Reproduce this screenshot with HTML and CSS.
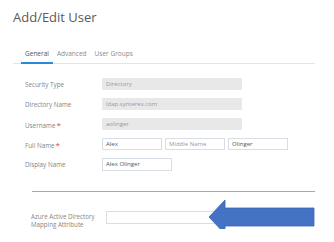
FILE: index.html
```html
<!DOCTYPE html>
<html lang="en">
<head>
    <meta charset="UTF-8">
    <title>Add/Edit User</title>
    <link rel="stylesheet" href="styles.css">
</head>
<body>
    <div class="page">
        <h1>Add/Edit User</h1>

        <!-- Tabs -->
        <div class="tabs">
            <span class="tab active">General</span>
            <span class="tab">Advanced</span>
            <span class="tab">User Groups</span>
        </div>

        <div class="form">
            <div class="row">
                <label>Security Type</label>
                <div class="field ro">Directory</div>
            </div>
            <div class="row">
                <label>Directory Name</label>
                <div class="field ro">ldap.synterex.com</div>
            </div>
            <div class="row">
                <label>Username<span class="req">*</span></label>
                <div class="field ro">aolinger</div>
            </div>
            <div class="row">
                <label>Full Name<span class="req">*</span></label>
                <div class="names">
                    <div class="field small">Alex</div>
                    <div class="field small hint">Middle Name</div>
                    <div class="field small">Olinger</div>
                </div>
            </div>
            <div class="row">
                <label>Display Name</label>
                <div class="field display">Alex Olinger</div>
            </div>
        </div>

        <hr class="sep">

        <div class="azure">
            <label>Azure Active Directory<br>Mapping Attribute</label>
            <div class="field azure-field"></div>
            <svg class="arrow" width="106" height="35" viewBox="0 0 106 35">
                <polygon points="0,17 16,0 16,8 105,8 105,26 16,26 16,34" fill="#4472c4" stroke="#3a64b0" stroke-width="0.8"/>
            </svg>
        </div>
    </div>
</body>
</html>
```

FILE: styles.css
```css
body {
    margin: 0;
    background: #ffffff;
    font-family: "Open Sans", Arial, sans-serif;
    color: #666;
}
.page {
    padding: 8px 19px 0 13px;
    position: relative;
}
h1 {
    font-size: 13px;
    font-weight: 400;
    color: #5a5a5a;
    margin: 0;
    line-height: 18px;
}
.tabs {
    margin-top: 21px;
    border-bottom: 1px solid #e4e4e4;
    padding-left: 8px;
    display: flex;
    font-size: 6.5px;
}
.tab {
    padding: 2px 4px 4px;
    color: #8a8a8a;
    border-bottom: 2px solid transparent;
    margin-bottom: -1px;
}
.tab.active {
    color: #555;
    border-bottom-color: #2a8ad8;
}
.form {
    padding: 14px 0 0 12px;
    display: flex;
    flex-direction: column;
    gap: 8px;
}
.row {
    display: flex;
    align-items: center;
    height: 12px;
}
.row label {
    width: 77px;
    font-size: 6.3px;
    color: #858585;
}
.req {
    color: #e0453a;
    font-size: 8px;
    margin-left: 1px;
}
.field {
    box-sizing: border-box;
    height: 12px;
    font-size: 6px;
    line-height: 10px;
    padding: 0 3px;
    color: #555;
    border: 1px solid #d8dee6;
    background: #fff;
}
.field.ro {
    width: 140px;
    background: #e8e8e8;
    border-color: #e8e8e8;
    color: #999;
}
.names {
    display: flex;
    gap: 3px;
}
.field.small {
    width: 60px;
}
.field.hint {
    color: #999;
}
.field.display {
    width: 70px;
    height: 13px;
}
.sep {
    border: none;
    border-top: 1px solid #a9a9a9;
    margin: 21px 0 0 19px;
}
.azure {
    display: flex;
    align-items: center;
    padding: 14px 0 0 18px;
    position: relative;
}
.azure label {
    width: 75px;
    font-size: 6.2px;
    line-height: 8px;
    color: #858585;
    padding-top: 7px;
}
.azure-field {
    width: 140px;
    height: 13px;
}
.arrow {
    position: absolute;
    left: 196px;
    top: 8px;
}
```
